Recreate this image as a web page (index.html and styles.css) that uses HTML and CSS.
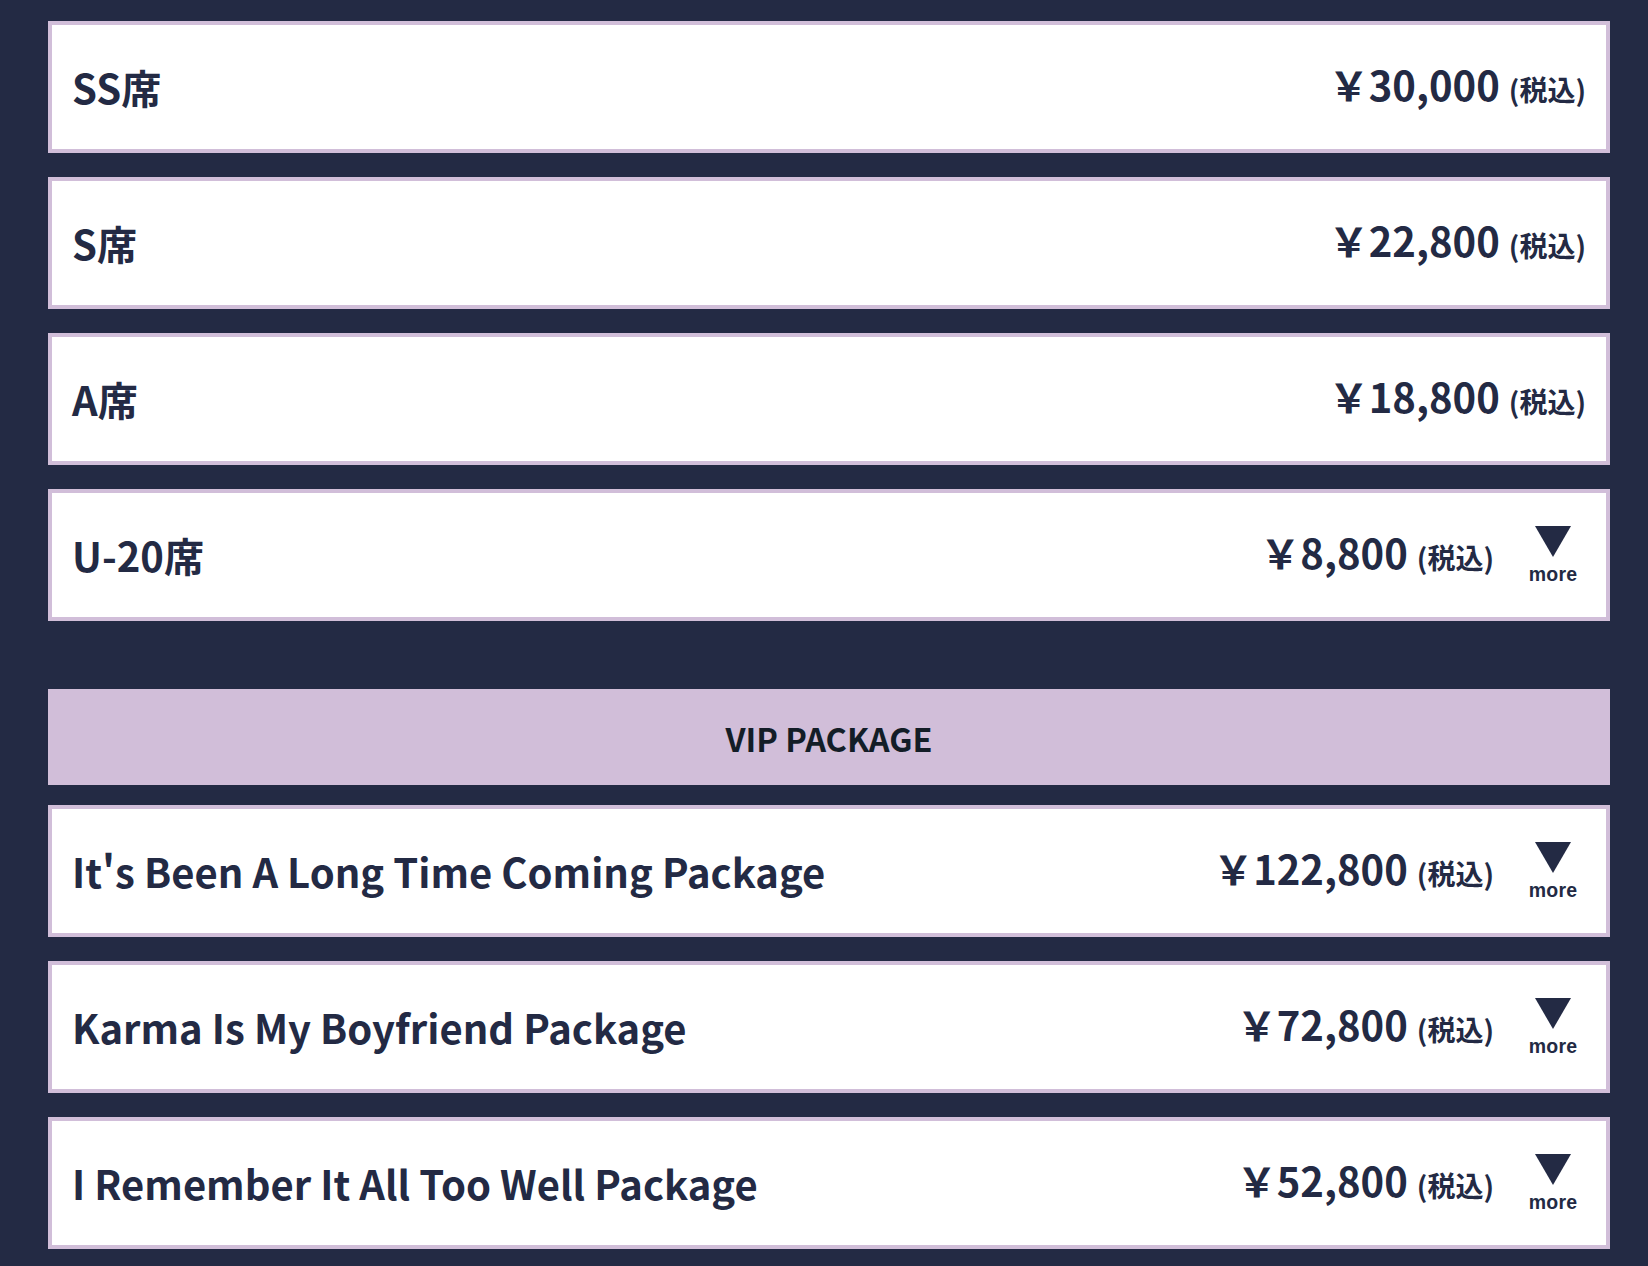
FILE: index.html
```html
<!DOCTYPE html>
<html lang="ja">
<head>
<meta charset="utf-8">
<title>Ticket prices</title>
<link rel="stylesheet" href="styles.css">
</head>
<body>
<main class="page">
  <ul class="tickets">
    <li class="ticket">
      <span class="ticket-name">SS席</span>
      <span class="price">￥30,000 <small class="tax">(税込)</small></span>
    </li>
    <li class="ticket">
      <span class="ticket-name">S席</span>
      <span class="price">￥22,800 <small class="tax">(税込)</small></span>
    </li>
    <li class="ticket">
      <span class="ticket-name">A席</span>
      <span class="price">￥18,800 <small class="tax">(税込)</small></span>
    </li>
    <li class="ticket">
      <span class="ticket-name">U-20席</span>
      <span class="price">￥8,800 <small class="tax">(税込)</small></span>
      <span class="more"><span class="more-arrow"></span><span class="more-label">more</span></span>
    </li>
  </ul>

  <h2 class="section-head">VIP PACKAGE</h2>

  <ul class="tickets">
    <li class="ticket">
      <span class="ticket-name">It's Been A Long Time Coming Package</span>
      <span class="price">￥122,800 <small class="tax">(税込)</small></span>
      <span class="more"><span class="more-arrow"></span><span class="more-label">more</span></span>
    </li>
    <li class="ticket">
      <span class="ticket-name">Karma Is My Boyfriend Package</span>
      <span class="price">￥72,800 <small class="tax">(税込)</small></span>
      <span class="more"><span class="more-arrow"></span><span class="more-label">more</span></span>
    </li>
    <li class="ticket">
      <span class="ticket-name">I Remember It All Too Well Package</span>
      <span class="price">￥52,800 <small class="tax">(税込)</small></span>
      <span class="more"><span class="more-arrow"></span><span class="more-label">more</span></span>
    </li>
  </ul>
</main>
</body>
</html>
```

FILE: styles.css
```css
html, body {
  margin: 0;
  padding: 0;
  background: #232a44;
}

body {
  font-family: "Noto Sans CJK JP", "Noto Sans", sans-serif;
  color: #232a44;
}

.page {
  padding: 21px 38px 17px 48px;
}

.tickets {
  list-style: none;
  margin: 0;
  padding: 0;
  display: flex;
  flex-direction: column;
  gap: 24px;
}

.ticket {
  box-sizing: border-box;
  height: 132px;
  background: #ffffff;
  border: 4px solid #d1bed9;
  display: flex;
  align-items: center;
  padding: 0 20px 0 20px;
}

.ticket-name {
  flex: 1;
  font-size: 40px;
  font-weight: 700;
  line-height: 1;
}

.price {
  font-size: 40px;
  font-weight: 700;
  line-height: 1;
  white-space: nowrap;
  margin-bottom: 6px;
}

.tax {
  font-size: 28px;
  font-weight: 700;
}

.more {
  width: 62px;
  margin-left: 28px;
  margin-right: 2px;
  display: flex;
  flex-direction: column;
  align-items: center;
  gap: 8px;
}

.more-arrow {
  width: 0;
  height: 0;
  border-left: 18.5px solid transparent;
  border-right: 18.5px solid transparent;
  border-top: 31px solid #232a44;
}

.more-label {
  font-family: "Liberation Sans", Arial, sans-serif;
  font-weight: 700;
  font-size: 19.5px;
  line-height: 1;
  letter-spacing: 0.2px;
}

.section-head {
  margin: 68px 0 20px;
  height: 96px;
  background: #d1bed9;
  color: #131d27;
  font-size: 32.5px;
  font-weight: 700;
  display: flex;
  align-items: center;
  justify-content: center;
}
```
